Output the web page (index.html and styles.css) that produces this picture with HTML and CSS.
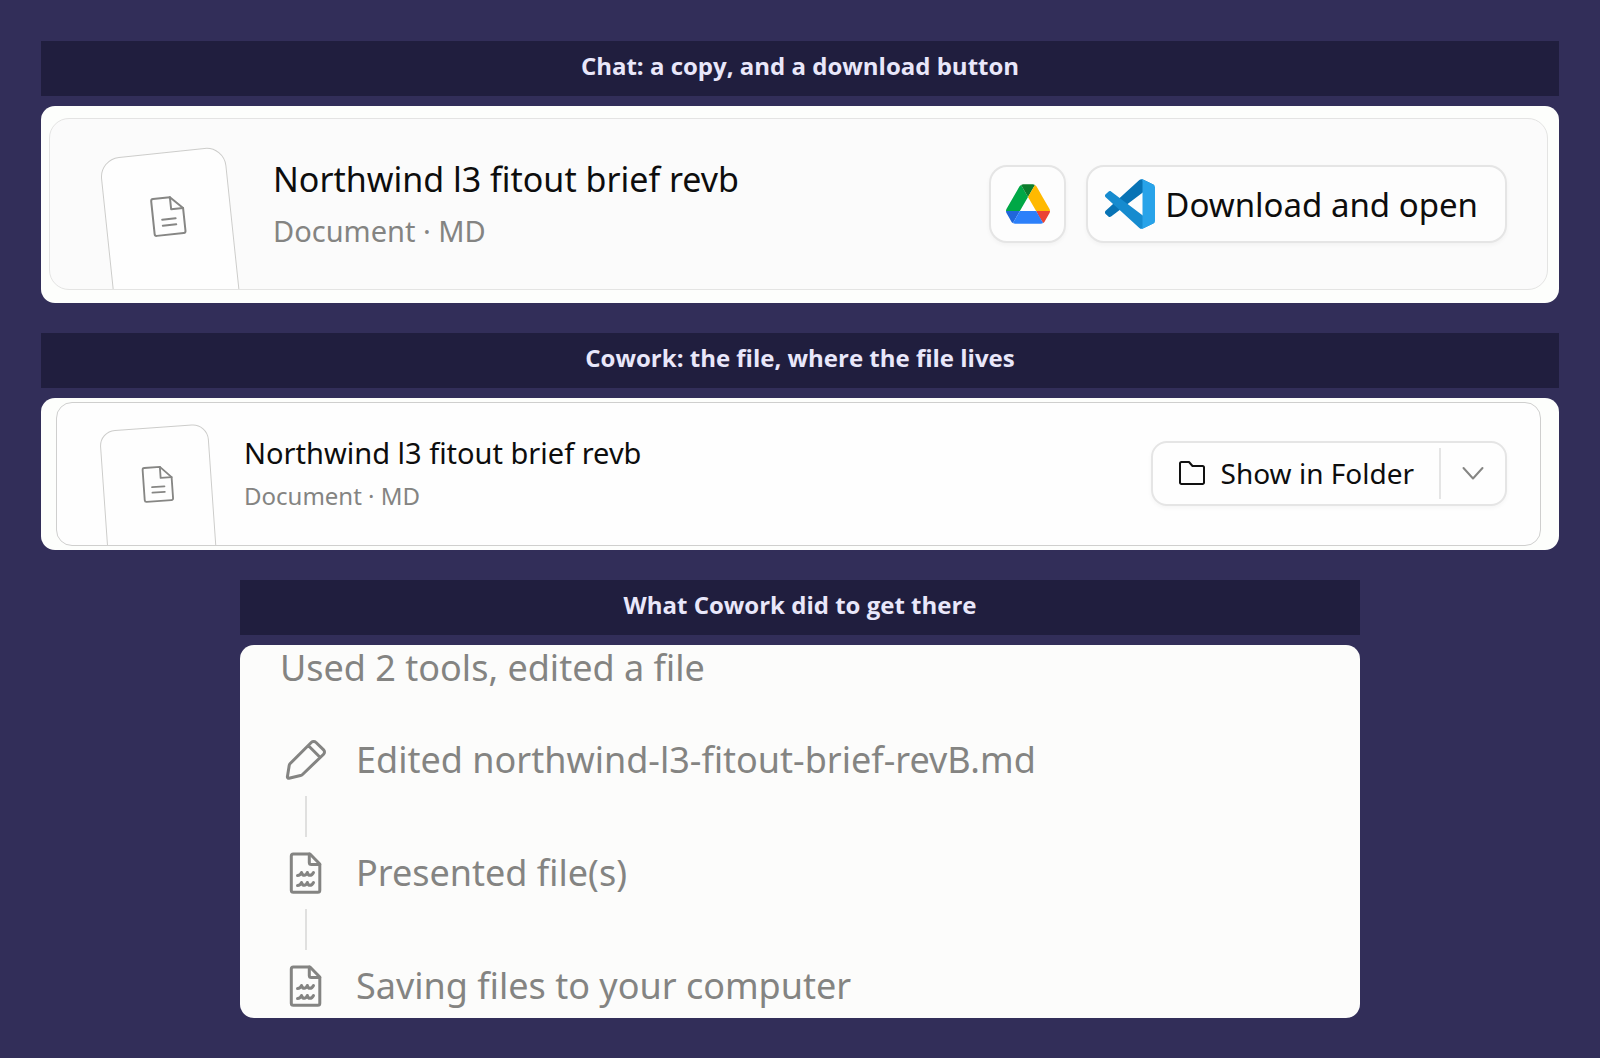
FILE: index.html
```html
<!DOCTYPE html>
<html lang="en">
<head>
<meta charset="utf-8">
<meta name="viewport" content="width=device-width, initial-scale=1">
<title>Chat and Cowork compared</title>
<link rel="stylesheet" href="styles.css">
</head>
<body>
<svg class="sprite" aria-hidden="true">
  <symbol id="doc" viewBox="0 0 48 48">
    <path d="M27.500 5.500H10.500a2 2 0 0 0-2 2v33a2 2 0 0 0 2 2h27a2 2 0 0 0 2-2V17.500z"/>
    <path d="M27.500 5.500v12h12M17.500 27h13.500M17.500 33h13.500"/>
  </symbol>
  <symbol id="notes" viewBox="0 0 48 48">
    <path d="M28 5H11.300a2 2 0 0 0-2 2v34.300a2 2 0 0 0 2 2h24.500a2 2 0 0 0 2-2V15z"/>
    <path d="M27.300 5v8.500a2 2 0 0 0 2 2h8.500"/>
    <path d="M15.500 26.500c2.200 0 3.200-1 4-3 .6 2 1.600 2.800 2.800 2.800s2.300-.8 3-2.800c.6 2 1.400 2.800 2.600 2.800s2.700-1 3.600-2.800M15.500 36.500c2.200 0 3.200-1 4-3 .6 2 1.600 2.800 2.800 2.800s2.300-.8 3-2.800c.6 2 1.400 2.800 2.600 2.800s2.700-1 3.600-2.800"/>
  </symbol>
</svg>
<main class="page">
  <section class="panel">
    <h2 class="caption">Chat: a copy, and a download button</h2>
    <div class="shot shot-chat">
      <article class="file file-chat">
        <div class="tile"><svg class="tile-icon" aria-hidden="true"><use href="#doc"/></svg></div>
        <div class="info">
          <h3 class="name">Northwind l3 fitout brief revb</h3>
          <p class="meta">Document · MD</p>
        </div>
        <div class="actions">
          <button class="button button-drive" type="button" aria-label="Save to Google Drive">
            <svg class="drive" viewBox="0 0 87.300 78" aria-hidden="true">
              <path fill="#2066da" d="m6.600 66.850 3.850 6.650c.8 1.400 1.950 2.500 3.300 3.300l13.750-23.800H0c0 1.550.4 3.100 1.200 4.500z"/>
              <path fill="#00a846" d="M43.650 25 29.900 1.200c-1.350.8-2.500 1.900-3.300 3.300l-25.400 44A9.060 9.060 0 0 0 0 53h27.500z"/>
              <path fill="#ea4335" d="M73.550 76.800c1.350-.8 2.500-1.900 3.300-3.300l1.600-2.750 7.650-13.250c.8-1.400 1.200-2.950 1.200-4.500H59.800l5.850 11.500z"/>
              <path fill="#0b7d2c" d="M43.650 25 57.400 1.200C56.050.4 54.500 0 52.900 0H34.400c-1.600 0-3.150.45-4.500 1.200z"/>
              <path fill="#2c80fa" d="M59.800 53H27.500L13.750 76.800c1.350.8 2.900 1.200 4.500 1.200h50.800c1.600 0 3.150-.45 4.500-1.200z"/>
              <path fill="#ffb900" d="m73.400 26.500-12.700-22c-.8-1.400-1.950-2.500-3.300-3.300L43.650 25l16.150 28h27.450c0-1.550-.4-3.100-1.200-4.500z"/>
            </svg>
          </button>
          <button class="button button-open" type="button">
            <svg class="vscode" viewBox="0 0 100 100" aria-hidden="true">
              <path fill="#0873b5" d="M96.460 10.800 75.860.9c-2.360-1.170-5.260-.7-7.110 1.200L1.300 63.600c-1.800 1.650-1.800 4.500 0 6.150l5.500 5c1.500 1.350 3.750 1.450 5.350.25L93.400 13.400c2.700-2.100 6.600-.1 6.600 3.300v-.2c0-2.400-1.400-4.600-3.540-5.700z"/>
              <path fill="#168bcf" d="M96.460 89.200 75.860 99.100c-2.400 1.150-5.250.66-7.110-1.200L1.300 36.400c-1.800-1.650-1.800-4.500 0-6.150l5.500-5c1.500-1.350 3.750-1.450 5.350-.25L93.400 86.600c2.700 2.100 6.600.1 6.600-3.300v.2c0 2.400-1.400 4.600-3.540 5.700z"/>
              <path fill="#28a3e9" d="M75.860 99.100c-2.400 1.150-5.250.66-7.110-1.200 2.300 2.300 6.250.67 6.250-2.600V4.700c0-3.250-3.940-4.900-6.250-2.600 1.860-1.860 4.710-2.350 7.110-1.200l20.600 9.900C98.600 11.850 100 14 100 16.400v67.200c0 2.400-1.400 4.600-3.540 5.640z"/>
            </svg>
            Download and open
          </button>
        </div>
      </article>
    </div>
  </section>

  <section class="panel">
    <h2 class="caption">Cowork: the file, where the file lives</h2>
    <div class="shot shot-cowork">
      <article class="file file-cowork">
        <div class="tile"><svg class="tile-icon" aria-hidden="true"><use href="#doc"/></svg></div>
        <div class="info">
          <h3 class="name">Northwind l3 fitout brief revb</h3>
          <p class="meta">Document · MD</p>
        </div>
        <div class="split">
          <button class="split-main" type="button">
            <svg class="folder" viewBox="0 0 28 28" aria-hidden="true"><path d="M2 4.500a1.500 1.500 0 0 1 1.500-1.500h7.500l3.500 4h10a1.500 1.500 0 0 1 1.500 1.500v15a1.500 1.500 0 0 1-1.500 1.500h-21a1.500 1.500 0 0 1-1.500-1.500z"/></svg>
            Show in Folder
          </button>
          <button class="split-more" type="button" aria-label="More options">
            <svg class="chevron" viewBox="0 0 24 24" aria-hidden="true"><path d="m2.500 7 9.500 10.500L21.500 7"/></svg>
          </button>
        </div>
      </article>
    </div>
  </section>

  <section class="panel panel-steps">
    <h2 class="caption">What Cowork did to get there</h2>
    <div class="shot shot-steps">
      <p class="summary">Used 2 tools, edited a file</p>
      <ol class="steps">
        <li class="step">
          <svg class="step-icon" viewBox="0 0 48 48" aria-hidden="true"><path d="M8.200 27.500 29.500 6.300a3 3 0 0 1 4.300 0l7.800 7.600a3 3 0 0 1 0 4.300L20.500 38.500a4 4 0 0 1-2 1L7 42.300a1.400 1.400 0 0 1-1.600-1.600L7.200 29.500a4 4 0 0 1 1-2zM26.500 9.800l11.500 11.500"/></svg>
          <span>Edited northwind-l3-fitout-brief-revB.md</span>
        </li>
        <li class="step">
          <svg class="step-icon" aria-hidden="true"><use href="#notes"/></svg>
          <span>Presented file(s)</span>
        </li>
        <li class="step">
          <svg class="step-icon" aria-hidden="true"><use href="#notes"/></svg>
          <span>Saving files to your computer</span>
        </li>
      </ol>
    </div>
  </section>
</main>
</body>
</html>
```
FILE: styles.css
```css
*,
*::before,
*::after {
  box-sizing: border-box;
}

body {
  margin: 0;
  background: #322e59;
  color: #0d0d0d;
  font-family: "Noto Sans", "Open Sans", sans-serif;
}

h2,
h3,
p,
ol {
  margin: 0;
  padding: 0;
  font-weight: 400;
}

button {
  margin: 0;
  color: inherit;
  font-family: inherit;
  cursor: pointer;
}

svg {
  display: block;
  flex: none;
}

.sprite {
  display: none;
}

.page {
  display: flex;
  flex-direction: column;
  gap: 30px;
  padding: 41px;
}

.panel {
  display: flex;
  flex-direction: column;
  gap: 10px;
}

.panel-steps {
  width: 100%;
  max-width: 1120px;
  margin: 0 auto;
}

.caption {
  padding: 9px 16px 14px;
  background: #201e3e;
  color: #e9e7fa;
  font-family: "Open Sans", "Noto Sans", sans-serif;
  font-size: 24px;
  font-weight: 700;
  line-height: 32px;
  text-align: center;
}

.shot {
  border-radius: 14px;
  background: #fdfefc;
}

.shot-chat {
  padding: 12px 11px 13px 8px;
}

.shot-cowork {
  padding: 4px 18px 4px 15px;
}

/* File cards */

.file {
  display: flex;
  align-items: center;
  overflow: hidden;
  border: 1px solid #e4e4e3;
}

.file-chat {
  min-height: 172px;
  padding: 0 40px 0 49px;
  border-radius: 20px;
  background: #fbfbfb;
}

.file-cowork {
  min-height: 144px;
  padding: 0 33px 0 42px;
  border-color: #cfcfce;
  border-radius: 16px;
  background: #fefefe;
}

.tile {
  display: flex;
  flex: none;
  align-items: flex-start;
  align-self: stretch;
  justify-content: center;
  border: 1px solid #cdcdcb;
  border-radius: 20px;
  background: #fefefe;
  transform-origin: 0 0;
}

.file-chat .tile {
  width: 126px;
  margin: 40px 48px -40px 0;
  padding-top: 39px;
  transform: rotate(-6deg);
}

.file-cowork .tile {
  width: 109px;
  margin: 28px 36px -40px 0;
  padding-top: 34px;
  border-radius: 16px;
  transform: rotate(-4deg);
}

.tile-icon {
  width: 48px;
  height: 48px;
  fill: none;
  stroke: #868684;
  stroke-width: 2;
  stroke-linecap: round;
  stroke-linejoin: round;
}

.file-cowork .tile-icon {
  width: 44px;
  height: 44px;
}

.info {
  flex: 1;
  min-width: 0;
  padding-top: 2px;
}

.name {
  font-size: 34px;
  line-height: 52px;
}

.meta {
  color: #848482;
  font-size: 29px;
  line-height: 52px;
}

.file-cowork .name {
  font-size: 29px;
  line-height: 42px;
}

.file-cowork .meta {
  font-size: 24px;
  line-height: 44px;
}

.actions {
  display: flex;
  flex: none;
  gap: 20px;
}

.button {
  display: flex;
  align-items: center;
  justify-content: center;
  height: 78px;
  border: 2px solid #e5e5e5;
  border-radius: 18px;
  background: #fdfdfd;
  box-shadow: 0 2px 4px #0000000a;
  font-size: 33px;
}

.button-drive {
  width: 77px;
  padding: 0;
}

.button-open {
  gap: 10px;
  padding: 0 27px 0 17px;
}

.drive {
  width: 44px;
  height: 40px;
}

.vscode {
  width: 50px;
  height: 50px;
}

.split {
  display: flex;
  flex: none;
  align-items: center;
  height: 65px;
  margin-bottom: 2px;
  border: 2px solid #e5e5e5;
  border-radius: 16px;
  background: #fefefe;
  box-shadow: 0 2px 4px #0000000a;
}

.split-main,
.split-more {
  display: flex;
  align-items: center;
  height: 51px;
  border: 0;
  background: none;
}

.split-main {
  gap: 15px;
  padding: 0 25px;
  font-size: 28px;
}

.split-more {
  justify-content: center;
  width: 66px;
  padding: 0;
  border-left: 2px solid #e5e5e5;
}

.folder,
.chevron {
  width: 28px;
  height: 28px;
  fill: none;
  stroke: #111;
  stroke-width: 2;
  stroke-linejoin: round;
}

.chevron {
  width: 24px;
  height: 24px;
  stroke: #868684;
  stroke-linecap: round;
}

/* Activity log */

.shot-steps {
  padding: 0 40px 8px;
  background: #fcfcfb;
  color: #848482;
}

.summary {
  font-size: 36px;
  line-height: 46px;
}

.steps {
  display: flex;
  flex-direction: column;
  margin-top: 45px;
  list-style: none;
}

.step {
  display: grid;
  grid-template-columns: 52px 1fr;
  column-gap: 24px;
  justify-items: start;
  font-size: 36px;
  line-height: 48px;
}

/* Line that joins one step to the next */
.step:not(:last-child)::after {
  content: "";
  grid-column: 1;
  justify-self: center;
  width: 2px;
  height: 41px;
  margin: 12px 0;
  background: #e0e0df;
}

.step-icon {
  justify-self: center;
  width: 48px;
  height: 48px;
  fill: none;
  stroke: #848482;
  stroke-width: 3;
  stroke-linecap: round;
  stroke-linejoin: round;
}
```
